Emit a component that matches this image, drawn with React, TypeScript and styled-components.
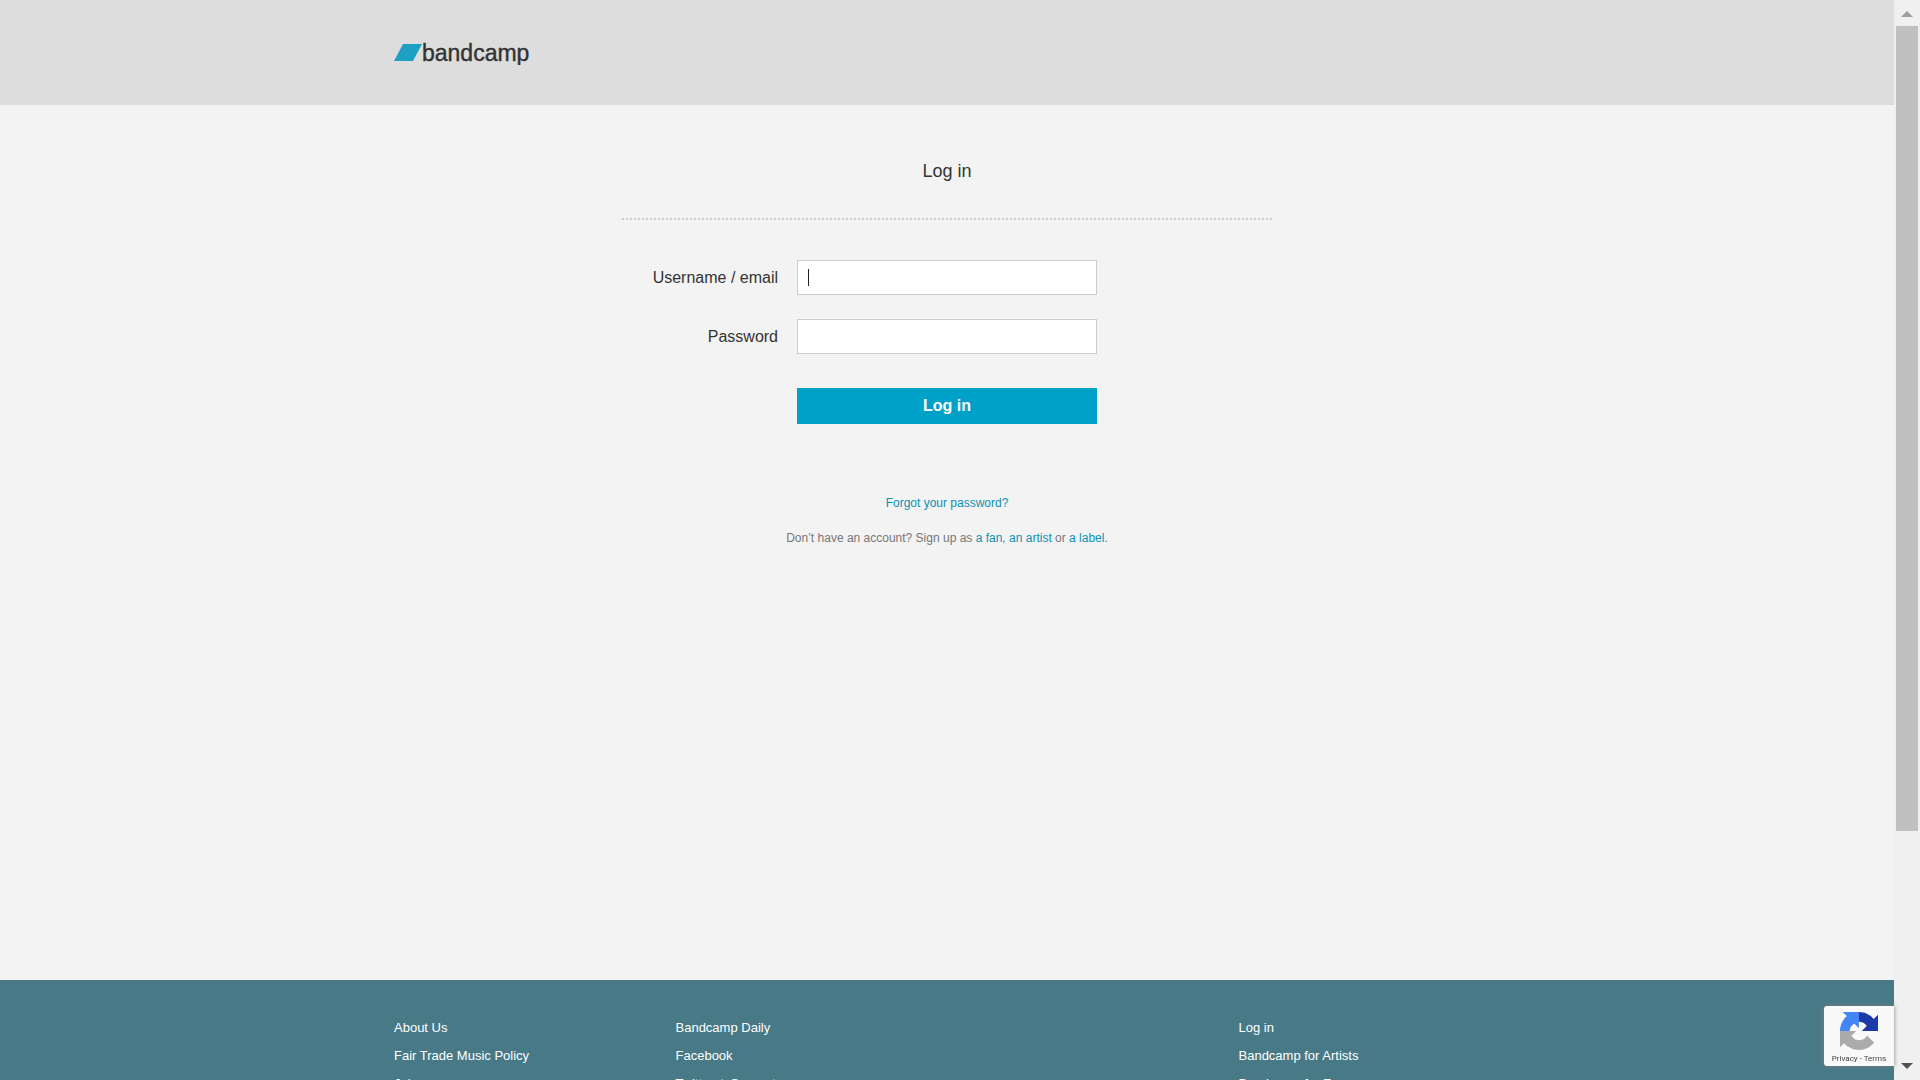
import React from "react";
import styled, { createGlobalStyle } from "styled-components";

const GlobalStyle = createGlobalStyle`
  *, *::before, *::after { box-sizing: border-box; }
  body {
    margin: 0;
    background: #f3f3f3;
    color: #333;
    font-family: "Liberation Sans", Arial, Helvetica, sans-serif;
  }
`;

const Viewport = styled.div`
  display: grid;
  grid-template-columns: minmax(0, 1fr) 26px;
  height: 100vh;
  overflow: hidden;
`;

const Page = styled.div`
  display: flex;
  flex-direction: column;
  overflow: hidden;
`;

const Container = styled.div`
  width: 100%;
  max-width: 1106px;
  margin: 0 auto;
`;

const Header = styled.header`
  flex: none;
  padding: 40px 0;
  background: #ddd;
`;

const LogoLink = styled.a`
  display: block;
  width: 140px;
  height: 25px;
`;

const Main = styled.main`
  flex: 1 0 auto;
  width: 100%;
  max-width: 650px;
  margin: 0 auto;
`;

const Title = styled.h1`
  margin: 0;
  padding: 56px 0 37px;
  border-bottom: 2px dotted #ccc;
  font-size: 18px;
  font-weight: 400;
  line-height: 20px;
  text-align: center;
`;

const Form = styled.form`
  display: grid;
  grid-template-columns: minmax(0, 1fr) 300px minmax(0, 1fr);
  row-gap: 24px;
  padding-top: 40px;
`;

const Label = styled.label`
  grid-column: 1;
  padding-right: 19px;
  font-size: 16px;
  line-height: 35px;
  text-align: right;
`;

const Field = styled.div`
  grid-column: 2;
  position: relative;
`;

const Input = styled.input`
  display: block;
  width: 100%;
  height: 35px;
  padding: 0 10px;
  border: 1px solid #ccc;
  border-radius: 0;
  outline: none;
  background: #fff;
  color: #333;
  caret-color: transparent;
  font: inherit;
  font-size: 16px;
`;

const Caret = styled.span`
  position: absolute;
  top: 9px;
  left: 11px;
  width: 1px;
  height: 17px;
  background: #222;
`;

const Submit = styled.button`
  grid-column: 2;
  height: 36px;
  margin-top: 10px;
  padding: 0;
  border: 0;
  background: #00a1c9;
  color: #fff;
  font: inherit;
  font-size: 16px;
  font-weight: 700;
`;

const Help = styled.div`
  display: grid;
  row-gap: 19px;
  padding: 71px 0 0;
  color: #777;
  font-size: 12px;
  line-height: 16px;
  text-align: center;
`;

const Paragraph = styled.p`
  margin: 0;
`;

const TextLink = styled.a`
  color: #0b91b3;
  text-decoration: none;
`;

const Footer = styled.footer`
  flex: none;
  height: 100px;
  padding-top: 34px;
  background: #477987;
`;

const Columns = styled(Container)`
  display: grid;
  grid-template-columns: repeat(4, minmax(0, 1fr));
  column-gap: 20px;
`;

const LinkList = styled.ul<{ $column: number }>`
  grid-column: ${(p) => p.$column};
  grid-row: 1;
  margin: 0;
  padding: 0;
  list-style: none;
`;

const LinkItem = styled.li`
  color: #fff;
  font-size: 13px;
  line-height: 28px;
`;

const FooterLink = styled.a`
  color: inherit;
  text-decoration: none;
`;

const Divider = styled.span`
  margin: 0 3px;
  opacity: 0.6;
`;

const Badge = styled.aside`
  position: fixed;
  right: 26px;
  bottom: 14px;
  display: flex;
  flex-direction: column;
  align-items: center;
  width: 70px;
  height: 60px;
  padding-top: 6px;
  border-radius: 3px 0 0 3px;
  background: #f9f9f9;
  box-shadow: 0 0 4px #808080;
`;

const BadgeText = styled.div`
  margin-top: 3px;
  color: #444;
  font-family: Roboto, "Liberation Sans", sans-serif;
  font-size: 8px;
  line-height: 12px;
  white-space: nowrap;
`;

const BadgeLink = styled.a`
  color: inherit;
  text-decoration: none;
`;

const Scrollbar = styled.div`
  display: grid;
  grid-template-rows: 26px minmax(0, 1fr) 26px;
  background: #f0f0f0;
`;

const Arrow = styled.svg`
  display: block;
  width: 26px;
  height: 26px;
`;

const Track = styled.div`
  padding: 0 2px;
`;

const Thumb = styled.div`
  height: 78.3%;
  background: #c0c0c0;
`;

const footerColumns = [
  { column: 1, rows: [["About Us"], ["Fair Trade Music Policy"], ["Jobs"]] },
  { column: 2, rows: [["Bandcamp Daily"], ["Facebook"], ["Twitter", "Support"]] },
  { column: 4, rows: [["Log in"], ["Bandcamp for Artists"], ["Bandcamp for Fans"]] },
];

function Logo() {
  return (
    <svg width="140" height="25" viewBox="0 0 140 25" role="img" aria-label="bandcamp">
      <path d="M9 4H28L19 21H0Z" fill="#1da0c3" />
      <text
        x="28"
        y="21"
        fill="#333"
        stroke="#333"
        strokeWidth="0.4"
        fontFamily="Liberation Sans, Arial, sans-serif"
        fontSize="23"
      >
        bandcamp
      </text>
    </svg>
  );
}

function RecaptchaMark() {
  return (
    <svg width="38" height="38" viewBox="0 0 64 64" aria-hidden="true">
      <path
        fill="#1c3aa9"
        d="M64 31.955a33 33 0 0 0-.033-1.37V4.687l-7.16 7.16C50.948 4.674 42.033.093 32.05.093c-10.4 0-19.63 4.96-25.458 12.64l11.736 11.86a15.55 15.55 0 0 1 4.754-5.334c2.05-1.6 4.952-2.906 8.968-2.906.485 0 .86.057 1.135.163 4.976.393 9.288 3.14 11.828 7.124l-8.307 8.307L64 31.953"
      />
      <path
        fill="#4285f4"
        d="M31.862.094a33 33 0 0 0-1.37.033H4.594l7.16 7.16C4.58 13.147 0 22.06 0 32.046c0 10.4 4.96 19.63 12.64 25.458L24.5 45.768a15.55 15.55 0 0 1-5.334-4.754c-1.6-2.05-2.906-4.952-2.906-8.968 0-.485.057-.86.163-1.135.393-4.976 3.14-9.288 7.124-11.828l8.307 8.307L31.86.095"
      />
      <path
        fill="#ababab"
        d="M.001 32.045a33 33 0 0 0 .033 1.37v25.898l7.16-7.16c5.86 7.173 14.774 11.754 24.76 11.754 10.4 0 19.63-4.96 25.458-12.64l-11.736-11.86a15.55 15.55 0 0 1-4.754 5.334c-2.05 1.6-4.952 2.906-8.968 2.906-.485 0-.86-.057-1.135-.163-4.976-.393-9.288-3.14-11.828-7.124l8.307-8.307c-10.522.04-22.4.066-27.295-.005"
      />
    </svg>
  );
}

export default function App() {
  return (
    <>
      <GlobalStyle />
      <Viewport>
        <Page>
          <Header>
            <Container>
              <LogoLink href="#home">
                <Logo />
              </LogoLink>
            </Container>
          </Header>
          <Main>
            <Title>Log in</Title>
            <Form onSubmit={(e) => e.preventDefault()}>
              <Label htmlFor="username">Username / email</Label>
              <Field>
                <Input id="username" type="text" autoComplete="username" />
                <Caret />
              </Field>
              <Label htmlFor="password">Password</Label>
              <Field>
                <Input id="password" type="password" autoComplete="current-password" />
              </Field>
              <Submit type="submit">Log in</Submit>
            </Form>
            <Help>
              <Paragraph>
                <TextLink href="#forgot">Forgot your password?</TextLink>
              </Paragraph>
              <Paragraph>
                Don’t have an account? Sign up as <TextLink href="#fan">a fan</TextLink>,{" "}
                <TextLink href="#artist">an artist</TextLink> or <TextLink href="#label">a label</TextLink>.
              </Paragraph>
            </Help>
          </Main>
          <Footer>
            <Columns>
              {footerColumns.map(({ column, rows }) => (
                <LinkList key={column} $column={column}>
                  {rows.map((links) => (
                    <LinkItem key={links[0]}>
                      {links.map((text, i) => (
                        <React.Fragment key={text}>
                          {i > 0 && (
                            <>
                              {" "}
                              <Divider>|</Divider>{" "}
                            </>
                          )}
                          <FooterLink href="#footer">{text}</FooterLink>
                        </React.Fragment>
                      ))}
                    </LinkItem>
                  ))}
                </LinkList>
              ))}
            </Columns>
          </Footer>
        </Page>
        <Scrollbar aria-hidden="true">
          <Arrow viewBox="0 0 26 26">
            <path d="M7 17L13 11L19 17Z" fill="#a0a0a0" />
          </Arrow>
          <Track>
            <Thumb />
          </Track>
          <Arrow viewBox="0 0 26 26">
            <path d="M7 9H19L13 15Z" fill="#505050" />
          </Arrow>
        </Scrollbar>
      </Viewport>
      <Badge>
        <RecaptchaMark />
        <BadgeText>
          <BadgeLink href="#privacy">Privacy</BadgeLink> - <BadgeLink href="#terms">Terms</BadgeLink>
        </BadgeText>
      </Badge>
    </>
  );
}
